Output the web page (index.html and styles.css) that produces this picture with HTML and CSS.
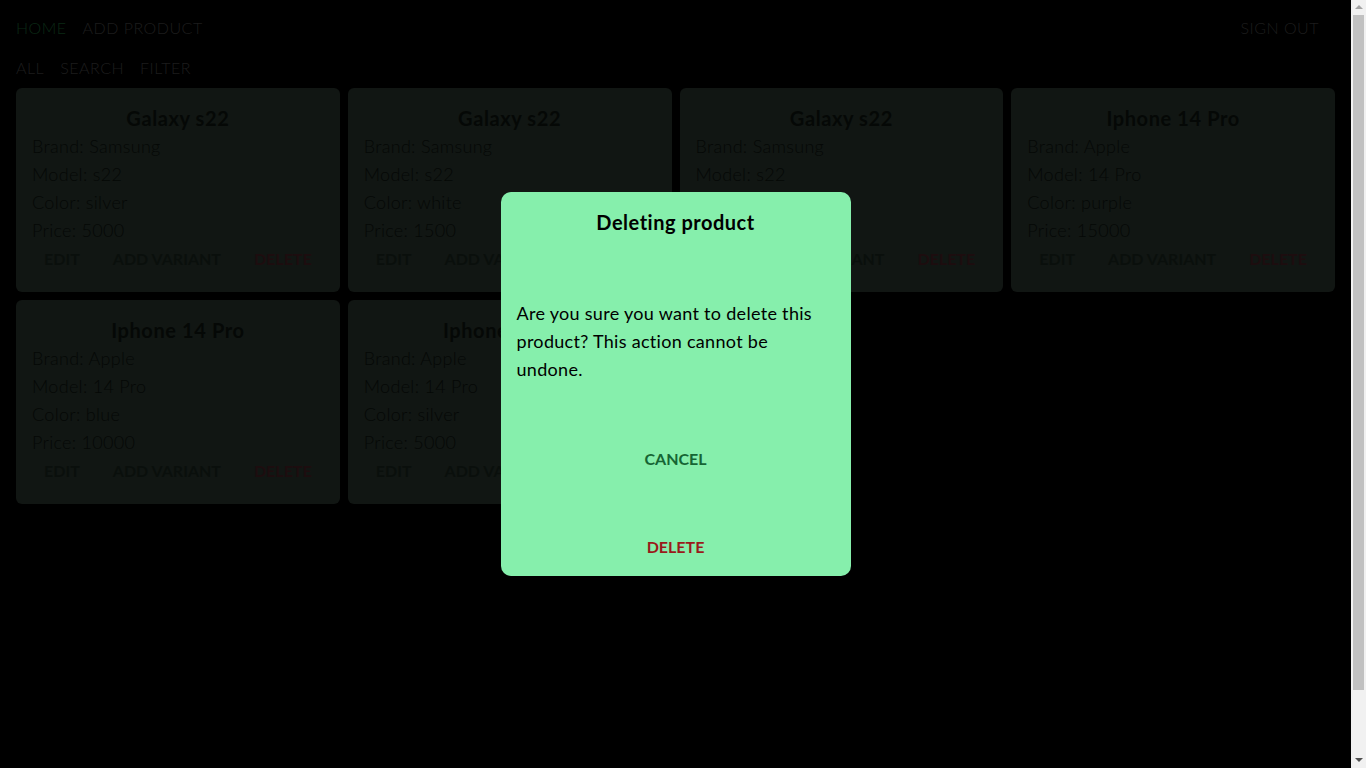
FILE: index.html
```html
<!DOCTYPE html>
<html lang="en">
	<head>
		<meta charset="utf-8">
		<meta name="viewport" content="width=device-width, initial-scale=1.0">
		<title>Products</title>
		<link rel="stylesheet" href="styles.css">
	</head>

	<body>
		<nav class="topbar">
			<div class="topbar-links">
				<a class="nav-link active" href="#">Home</a>
				<a class="nav-link" href="#">Add product</a>
			</div>
			<a class="nav-link" href="#">Sign out</a>
		</nav>

		<main class="page">
			<div class="filters">
				<a class="nav-link" href="#">All</a>
				<a class="nav-link" href="#">Search</a>
				<a class="nav-link" href="#">Filter</a>
			</div>

			<div class="product-grid">
				<div class="card">
					<h3 class="card-title">Galaxy s22</h3>
					<p class="card-line">Brand: Samsung</p>
					<p class="card-line">Model: s22</p>
					<p class="card-line">Color: silver</p>
					<p class="card-line">Price: 5000</p>
					<div class="card-actions">
						<button class="btn">Edit</button>
						<button class="btn">Add variant</button>
						<button class="btn btn-danger">Delete</button>
					</div>
				</div>
				<div class="card">
					<h3 class="card-title">Galaxy s22</h3>
					<p class="card-line">Brand: Samsung</p>
					<p class="card-line">Model: s22</p>
					<p class="card-line">Color: white</p>
					<p class="card-line">Price: 1500</p>
					<div class="card-actions">
						<button class="btn">Edit</button>
						<button class="btn">Add variant</button>
						<button class="btn btn-danger">Delete</button>
					</div>
				</div>
				<div class="card">
					<h3 class="card-title">Galaxy s22</h3>
					<p class="card-line">Brand: Samsung</p>
					<p class="card-line">Model: s22</p>
					<p class="card-line">Color: black</p>
					<p class="card-line">Price: 5000</p>
					<div class="card-actions">
						<button class="btn">Edit</button>
						<button class="btn">Add variant</button>
						<button class="btn btn-danger">Delete</button>
					</div>
				</div>
				<div class="card">
					<h3 class="card-title">Iphone 14 Pro</h3>
					<p class="card-line">Brand: Apple</p>
					<p class="card-line">Model: 14 Pro</p>
					<p class="card-line">Color: purple</p>
					<p class="card-line">Price: 15000</p>
					<div class="card-actions">
						<button class="btn">Edit</button>
						<button class="btn">Add variant</button>
						<button class="btn btn-danger">Delete</button>
					</div>
				</div>
				<div class="card">
					<h3 class="card-title">Iphone 14 Pro</h3>
					<p class="card-line">Brand: Apple</p>
					<p class="card-line">Model: 14 Pro</p>
					<p class="card-line">Color: blue</p>
					<p class="card-line">Price: 10000</p>
					<div class="card-actions">
						<button class="btn">Edit</button>
						<button class="btn">Add variant</button>
						<button class="btn btn-danger">Delete</button>
					</div>
				</div>
				<div class="card">
					<h3 class="card-title">Iphone 14 Pro</h3>
					<p class="card-line">Brand: Apple</p>
					<p class="card-line">Model: 14 Pro</p>
					<p class="card-line">Color: silver</p>
					<p class="card-line">Price: 5000</p>
					<div class="card-actions">
						<button class="btn">Edit</button>
						<button class="btn">Add variant</button>
						<button class="btn btn-danger">Delete</button>
					</div>
				</div>
			</div>
		</main>

		<div class="backdrop">
			<div class="dialog">
				<h2 class="dialog-title">Deleting product</h2>
				<p class="dialog-text">Are you sure you want to delete this product? This action cannot be undone.</p>
				<button class="dialog-btn cancel">Cancel</button>
				<button class="dialog-btn confirm">Delete</button>
			</div>
		</div>

		<div class="scrollbar" aria-hidden="true">
			<span class="scroll-arrow up"></span>
			<span class="scroll-thumb"></span>
			<span class="scroll-arrow down"></span>
		</div>
	</body>
</html>
```

FILE: styles.css
```css
html {
	font-size: 16px;
}
body {
	margin: 0;
	padding: 0 15px 0 0;
	background-color: #000;
	font-family: 'Lato', 'Open Sans', sans-serif;
}
a {
	text-decoration: none;
}
.topbar {
	display: flex;
	justify-content: space-between;
	align-items: center;
	height: 54px;
	padding: 0 32px 0 16px;
}
.topbar-links, .filters {
	display: flex;
	gap: 16px;
}
.nav-link {
	font-size: 16px;
	font-weight: 300;
	letter-spacing: 0.5px;
	text-transform: uppercase;
	color: #383838;
}
.nav-link.active {
	color: #165229;
}
.page {
	min-height: 100vh;
}
.filters {
	height: 26px;
	align-items: center;
	padding: 0 16px;
}
.product-grid {
	display: grid;
	grid-template-columns: repeat(4, 1fr);
	gap: 8px;
	padding: 8px 16px;
}
.card {
	background-color: #222c26;
	border-radius: 6px;
	padding: 16px;
	color: #0a100c;
}
.card-title {
	margin: 0;
	font-size: 20px;
	font-weight: 700;
	letter-spacing: 0.6px;
	line-height: 28px;
	text-align: center;
}
.card-line {
	margin: 0;
	font-size: 18px;
	font-weight: 300;
	letter-spacing: 0.3px;
	line-height: 28px;
}
.card-actions {
	display: flex;
	justify-content: center;
	gap: 33px;
}
.btn {
	font-family: inherit;
	font-size: 16px;
	font-weight: 700;
	line-height: 20px;
	text-transform: uppercase;
	background: none;
	border: none;
	padding: 5px 0 7px 0;
	color: #141f18;
	cursor: pointer;
}
.btn-danger {
	color: #3a1a1e;
}
.backdrop {
	position: fixed;
	top: 0;
	left: 0;
	right: 15px;
	bottom: 0;
	background-color: rgba(0,0,0,0.5);
	display: flex;
	align-items: center;
	justify-content: center;
}
.dialog {
	width: 350px;
	height: 384px;
	box-sizing: border-box;
	background-color: #86efac;
	border-radius: 10px;
	padding: 16px;
	display: flex;
	flex-direction: column;
	align-items: center;
}
.dialog-title {
	margin: 0;
	font-size: 20px;
	font-weight: 700;
	letter-spacing: 0.5px;
	line-height: 28px;
	color: #000;
}
.dialog-text {
	margin: 63px 0 0 0;
	font-size: 18px;
	letter-spacing: 0.3px;
	line-height: 28px;
	color: #000;
}
.dialog-btn {
	font-family: inherit;
	font-size: 16px;
	font-weight: 700;
	line-height: 20px;
	text-transform: uppercase;
	background: none;
	border: none;
	padding: 6px 8px;
	cursor: pointer;
}
.dialog-btn.cancel {
	margin-top: 60px;
	color: #166534;
}
.dialog-btn.confirm {
	margin-top: 56px;
	color: #991b1b;
}

/* page scrollbar, drawn since the window hides its own */
.scrollbar {
	position: fixed;
	top: 0;
	right: 0;
	bottom: 0;
	width: 15px;
	background-color: #f1f1f1;
	display: flex;
	flex-direction: column;
	align-items: center;
}
.scroll-arrow {
	flex: none;
	width: 0;
	height: 0;
	border-left: 4px solid transparent;
	border-right: 4px solid transparent;
}
.scroll-arrow.up {
	margin: 5px 0 4px 0;
	border-bottom: 4px solid #a3a3a3;
}
.scroll-arrow.down {
	margin: auto 0 6px 0;
	border-top: 4px solid #505050;
}
.scroll-thumb {
	flex: none;
	width: 11px;
	height: 675px;
	margin-top: 2px;
	background-color: #c1c1c1;
}
```
